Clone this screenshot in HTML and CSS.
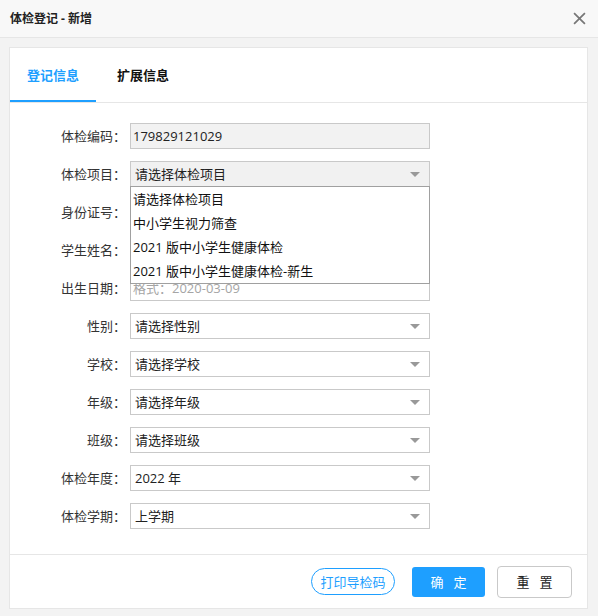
FILE: index.html
```html
<!DOCTYPE html>
<html lang="zh-CN">
<head>
<meta charset="utf-8">
<title>体检登记 - 新增</title>
<link rel="stylesheet" href="styles.css">
</head>
<body>
<div class="titlebar">
  <span class="title">体检登记 - 新增</span>
  <svg class="close" width="12" height="12" viewBox="0 0 12 12"><path d="M1 1L11 11M11 1L1 11" stroke="#777" stroke-width="1.6" fill="none"/></svg>
</div>
<div class="wrap">
  <div class="card">
    <div class="tabs">
      <div class="tab active">登记信息</div>
      <div class="tab">扩展信息</div>
    </div>
    <div class="form">
      <label class="lbl">体检编码：</label>
      <div class="field input disabled">179829121029</div>

      <label class="lbl">体检项目：</label>
      <div class="field select open">
        <span class="val">请选择体检项目</span><span class="arrow"></span>
        <ul class="dropdown">
          <li>请选择体检项目</li>
          <li>中小学生视力筛查</li>
          <li>2021 版中小学生健康体检</li>
          <li>2021 版中小学生健康体检-新生</li>
        </ul>
      </div>

      <label class="lbl">身份证号：</label>
      <div class="field input"></div>

      <label class="lbl">学生姓名：</label>
      <div class="field input"></div>

      <label class="lbl">出生日期：</label>
      <div class="field input placeholder">格式：2020-03-09</div>

      <label class="lbl">性别：</label>
      <div class="field select"><span class="val">请选择性别</span><span class="arrow"></span></div>

      <label class="lbl">学校：</label>
      <div class="field select"><span class="val">请选择学校</span><span class="arrow"></span></div>

      <label class="lbl">年级：</label>
      <div class="field select"><span class="val">请选择年级</span><span class="arrow"></span></div>

      <label class="lbl">班级：</label>
      <div class="field select"><span class="val">请选择班级</span><span class="arrow"></span></div>

      <label class="lbl">体检年度：</label>
      <div class="field select"><span class="val">2022 年</span><span class="arrow"></span></div>

      <label class="lbl">体检学期：</label>
      <div class="field select"><span class="val">上学期</span><span class="arrow"></span></div>
    </div>
    <div class="footer">
      <button class="btn btn-print">打印导检码</button>
      <button class="btn btn-ok">确&nbsp;&nbsp;&nbsp;定</button>
      <button class="btn btn-reset">重&nbsp;&nbsp;&nbsp;置</button>
    </div>
  </div>
</div>
</body>
</html>
```
FILE: styles.css
```css
* { box-sizing: border-box; }
html, body {
  margin: 0;
  padding: 0;
  height: 616px;
  overflow: hidden;
}
body {
  background: #f3f3f3;
  font-family: "Open Sans", "Noto Sans CJK SC", sans-serif;
  font-size: 13px;
  color: #333;
}
.titlebar {
  height: 38px;
  background: #f8f8f8;
  border-bottom: 1px solid #e6e6e6;
  display: flex;
  align-items: center;
  justify-content: space-between;
  padding: 0 12px 1px 10px;
}
.title {
  font-size: 12px;
  font-weight: 700;
  color: #222;
}
.close { display: block; width: 13px; height: 13px; }
.wrap {
  padding: 9px 10px 0 9px;
}
.card {
  height: 562px;
  background: #fff;
  border: 1px solid #e6e6e6;
  display: flex;
  flex-direction: column;
}
.tabs {
  height: 55px;
  border-bottom: 1px solid #e6e6e6;
  display: flex;
  gap: 4px;
}
.tab {
  width: 86px;
  height: 54px;
  display: flex;
  align-items: center;
  justify-content: center;
  font-weight: 700;
  color: #111;
  border-bottom: 2px solid transparent;
}
.tab.active {
  color: #1e9fff;
  border-bottom-color: #1e9fff;
}
.form {
  flex: 1;
  display: grid;
  grid-template-columns: 116px 300px;
  grid-auto-rows: 26px;
  column-gap: 4px;
  row-gap: 12px;
  padding-top: 20px;
  align-content: start;
}
.lbl {
  text-align: right;
  line-height: 26px;
  color: #333;
  white-space: nowrap;
}
.field {
  position: relative;
  height: 26px;
  border: 1px solid #c9c9c9;
  background: #fff;
  display: flex;
  align-items: center;
  line-height: 24px;
  color: #222;
  white-space: nowrap;
}
.input { padding-left: 2px; }
.input.disabled { background: #f2f2f2; }
.input.placeholder { color: #a5a5a5; }
.select { padding: 0 9px 0 4px; }
.select.open { background: #f1f1f1; }
.val { flex: 1; }
.arrow {
  width: 0;
  height: 0;
  border-left: 5px solid transparent;
  border-right: 5px solid transparent;
  border-top: 5px solid #999;
}
.dropdown {
  position: absolute;
  left: -1px;
  top: 24px;
  width: 300px;
  margin: 0;
  padding: 0;
  list-style: none;
  background: #fff;
  border: 1px solid #a0a0a0;
  z-index: 5;
}
.dropdown li {
  height: 24px;
  line-height: 24px;
  padding-left: 2px;
  color: #111;
}
.footer {
  height: 54px;
  border-top: 1px solid #e6e6e6;
  display: flex;
  align-items: center;
  justify-content: flex-end;
  padding-right: 15px;
}
.btn {
  font-family: inherit;
  font-size: 13px;
  cursor: pointer;
  padding: 0;
}
.btn-print {
  width: 84px;
  height: 27px;
  border: 1px solid #1e9fff;
  border-radius: 14px;
  background: #fff;
  color: #1e9fff;
  margin-right: 17px;
}
.btn-ok {
  width: 73px;
  height: 30px;
  border: none;
  border-radius: 3px;
  background: #1e9fff;
  color: #fff;
  margin-right: 12px;
}
.btn-reset {
  width: 75px;
  height: 32px;
  border: 1px solid #c9c9c9;
  border-radius: 4px;
  background: #fff;
  color: #222;
}
```
